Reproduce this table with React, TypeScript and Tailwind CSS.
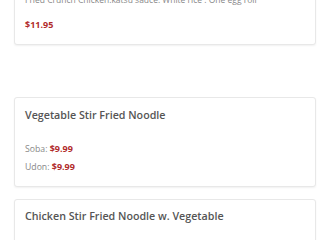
export default function App() {
  return (
    <div className="h-[240px] w-[320px] overflow-hidden bg-white font-['Open_Sans',sans-serif]">
      <div className="flex flex-col pl-[14px] pr-[4px]">
        <div className="-mt-[20px] mb-[52px] rounded-[3px] border border-[#e8e8e8] bg-white px-[10px] pt-[10px] pb-[10px] shadow-[0_1px_2px_rgba(0,0,0,0.06)]">
          <p className="text-[8.5px] leading-[18px] text-[#888]">
            Fried Crunch Chicken.katsu sauce. White rice . One egg roll
          </p>
          <p className="mt-[7px] text-[9px] font-bold leading-[18px] text-[#b12b2b]">$11.95</p>
        </div>

        <div className="mb-[12px] rounded-[3px] border border-[#e8e8e8] bg-white px-[10px] pt-[9px] pb-[10px] shadow-[0_1px_2px_rgba(0,0,0,0.06)]">
          <h3 className="text-[10.7px] font-semibold leading-[16px] text-[#555]">Vegetable Stir Fried Noodle</h3>
          <div className="mt-[17px] text-[8.7px] leading-[18px] text-[#888]">
            <p>
              Soba: <span className="text-[9px] font-bold text-[#b12b2b]">$9.99</span>
            </p>
            <p>
              Udon: <span className="text-[9px] font-bold text-[#b12b2b]">$9.99</span>
            </p>
          </div>
        </div>

        <div className="rounded-[3px] border border-[#e8e8e8] bg-white px-[10px] pt-[8px] pb-[40px] shadow-[0_1px_2px_rgba(0,0,0,0.06)]">
          <h3 className="text-[10.7px] font-semibold leading-[16px] text-[#555]">
            Chicken Stir Fried Noodle w. Vegetable
          </h3>
        </div>
      </div>
    </div>
  );
}
